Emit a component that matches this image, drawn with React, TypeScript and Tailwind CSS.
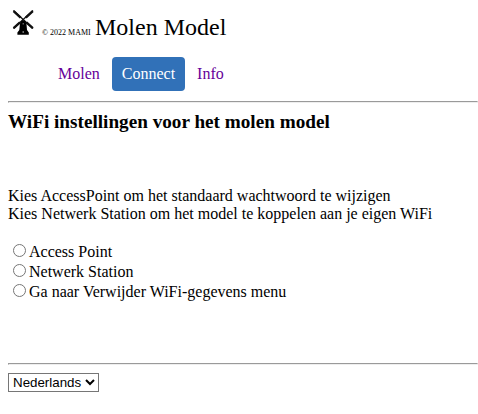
import React from 'react';

function Windmill() {
  return (
    <svg width="24" height="28" viewBox="0 0 24 28" className="block shrink-0">
      <g stroke="#111" fill="none">
        <path d="M2.4 2.6 L22 20.6 M22 2.6 L2.4 20.6" strokeWidth="1.3" />
        <path d="M2.6 3.2 L9.6 9.6 M21.8 3.2 L14.8 9.6 M9 14.3 L2.6 20.2 M15.4 14.3 L21.8 20.2" strokeWidth="2.4" />
      </g>
      <path d="M8.9 16.2 Q9.6 12.2 12.2 12.2 Q14.8 12.2 15.5 16.2 L16 22 L17.8 24.6 V26.8 H6.4 V24.6 L8.3 22 Z" fill="#000" />
      <path d="M11.7 15h1v1.6h-1zM11.6 23h1.2v2h-1.2z" fill="#888" />
    </svg>
  );
}

const options = ['Access Point', 'Netwerk Station', 'Ga naar Verwijder WiFi-gegevens menu'];

function Rule() {
  return <hr className="h-[2px] border border-t-[#9a9a9a] border-l-[#9a9a9a] border-r-[#eeeeee] border-b-[#eeeeee]" />;
}

export default function App() {
  return (
    <main className="h-[414px] overflow-hidden bg-white pl-2 font-['Liberation_Serif',serif] text-base leading-[18px] text-black">
      <header className="flex h-[41px] items-start pt-2 pl-[3px]">
        <Windmill />
        <span className="mt-[20px] ml-[7px] w-[53px] text-[8px] leading-[10px] whitespace-nowrap">© 2022 MAMI</span>
        <h1 className="mt-[6px] text-2xl leading-[27px] whitespace-nowrap">Molen Model</h1>
      </header>
      <nav className="mt-4 flex h-[34px] pl-10 text-[#660099]">
        <a className="rounded px-[10px] py-2">Molen</a>
        <a className="ml-[2px] rounded bg-[#3171b8] px-[10px] py-2 text-white">Connect</a>
        <a className="ml-[2px] rounded px-[10px] py-2">Info</a>
      </nav>
      <div className="mt-[10px]"><Rule /></div>
      <h2 className="mt-2 text-[19.2px] leading-[21px] font-bold">WiFi instellingen voor het molen model</h2>
      <p className="mt-[55px]">
        Kies AccessPoint om het standaard wachtwoord te wijzigen<br />
        Kies Netwerk Station om het model te koppelen aan je eigen WiFi
      </p>
      <form className="mt-[19px]">
        {options.map((label) => (
          <label key={label} className="flex h-5 items-start">
            <input type="radio" name="mode" className="mt-[2px] mr-[3px] ml-[5px] h-[13px] w-[13px]" />
            <span className="mt-px">{label}</span>
          </label>
        ))}
      </form>
      <div className="mt-[61px]"><Rule /></div>
      <select className="mt-2 block h-[19px] w-[91px] border border-[#767676] bg-white font-['Liberation_Sans',sans-serif] text-[13.333px] leading-normal text-black">
        <option>Nederlands</option>
      </select>
    </main>
  );
}
